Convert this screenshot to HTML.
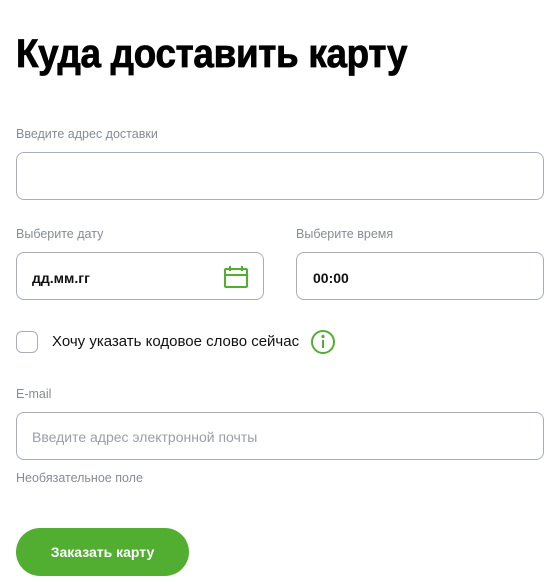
<!DOCTYPE html>
<html><head><meta charset="utf-8"><style>
body{margin:0;width:560px;height:584px;background:#fff;font-family:"Liberation Sans",sans-serif;position:relative;overflow:hidden}
.a{position:absolute}
h1{position:absolute;left:16px;top:28px;margin:0;font-size:40px;font-weight:bold;color:#000;letter-spacing:-0.3px;transform:scaleX(0.92);transform-origin:left;white-space:nowrap;line-height:52px;-webkit-text-stroke:0.8px #000}
.l{font-size:12.5px;color:#868b94}
.in{border:1px solid #a8adb8;border-radius:8px;box-sizing:border-box;height:48px}
.t{font-size:14px;font-weight:bold;color:#111;top:17px;left:16px}
</style></head><body>
<h1>Куда доставить карту</h1>
<div class="a l" style="left:16px;top:127px">Введите адрес доставки</div>
<div class="a in" style="left:16px;top:152px;width:528px"></div>
<div class="a l" style="left:16px;top:227px">Выберите дату</div>
<div class="a in" style="left:16px;top:252px;width:248px"><div class="a t" style="left:15px">дд.мм.гг</div>
<svg class="a" style="left:207px;top:12px" width="24" height="24" viewBox="0 0 24 24" fill="none" stroke="#52ae30" stroke-width="2"><rect x="1" y="4" width="22" height="18" rx="1"/><path d="M1 10H23M6 1V6M18 1V6"/></svg></div>
<div class="a l" style="left:296px;top:227px">Выберите время</div>
<div class="a in" style="left:296px;top:252px;width:248px"><div class="a t">00:00</div></div>
<div class="a" style="left:16px;top:331px;width:22px;height:22px;border:1px solid #a8adb8;border-radius:6px;box-sizing:border-box"></div>
<div class="a" style="left:52px;top:333px;font-size:15px;color:#111">Хочу указать кодовое слово сейчас</div>
<svg class="a" style="left:311px;top:330px" width="24" height="24" viewBox="0 0 24 24" fill="none" stroke="#52ae30" stroke-width="2"><circle cx="12" cy="12" r="11"/><path d="M12 10V18"/><circle cx="12" cy="6.5" r="0.6" fill="#52ae30"/></svg>
<div class="a l" style="left:16px;top:387px">E-mail</div>
<div class="a in" style="left:16px;top:412px;width:528px"><div class="a" style="left:15px;top:16px;font-size:14px;color:#9a9ea6">Введите адрес электронной почты</div></div>
<div class="a l" style="left:16px;top:471px">Необязательное поле</div>
<div class="a" style="left:16px;top:528px;width:173px;height:48px;border-radius:24px;background:#52ae30;color:#fff;font-size:14px;font-weight:bold;text-align:center;line-height:48px">Заказать карту</div>
</body></html>
